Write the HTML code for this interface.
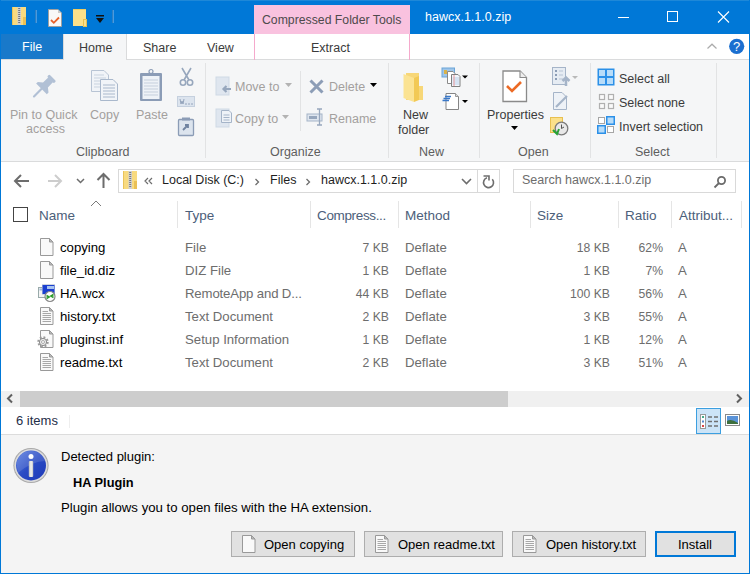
<!DOCTYPE html>
<html><head><meta charset="utf-8">
<style>
*{margin:0;padding:0;box-sizing:border-box}
html,body{width:750px;height:574px;overflow:hidden;background:#fff}
body{font-family:"Liberation Sans",sans-serif;font-size:12.5px;color:#000;position:relative}
.a{position:absolute;white-space:nowrap;line-height:1.15}
svg.a{overflow:visible}
#frame{position:absolute;left:0;top:0;width:750px;height:574px;border:1px solid #0078d7;border-top:none;pointer-events:none;z-index:50}
.gl{color:#5e5e5e}
.dis{color:#a3a09e}
.dk{color:#3b3b3b}
.sep{position:absolute;width:1px;background:#e2e3e4}
.hdr{color:#4c607a;font-size:13.5px}
.csep{position:absolute;top:201px;height:27px;width:1px;background:#e5e5e5}
.row{position:absolute;left:0;width:750px;height:23px}
.row div{font-size:13.2px;top:2px}
.row .num{font-size:12.2px;top:3px}
.nm{color:#000}
.gr{color:#6d6d6d}
.btn{position:absolute;top:531px;height:26px;background:#e1e1e1;border:1px solid #adadad}
.btn span{position:absolute;top:5px;font-size:13px;color:#000;white-space:nowrap}
</style></head><body>
<svg width="0" height="0" style="position:absolute">
<defs>
<g id="doc"><path d="M2.5 0.5H11.5L15 4V17.5H2.5Z" fill="#f9f9f9" stroke="#999"/><path d="M11.5 0.5V4H15Z" fill="#bbb" stroke="#999" stroke-linejoin="round"/></g>
<g id="ic-blank"><use href="#doc"/></g>
<g id="ic-txt"><use href="#doc"/><path d="M4.5 4.5H10M4.5 6.5H13M4.5 8.5H13M4.5 10.5H13M4.5 12.5H13M4.5 14.5H13" stroke="#a8a8a8"/></g>
<g id="ic-inf"><use href="#doc"/><circle cx="5" cy="12" r="4.6" fill="none" stroke="#9a9a9a" stroke-width="2.2" stroke-dasharray="1.8 1.8"/><circle cx="5" cy="12" r="3.6" fill="#ececec" stroke="#8a8a8a" stroke-width="1"/><circle cx="5" cy="12" r="1.5" fill="#fff" stroke="#999" stroke-width="0.8"/></g>
<g id="ic-wcx"><rect x="0.5" y="3.5" width="8" height="10" fill="#f4f4f4" stroke="#9aa"/><rect x="1.5" y="4.5" width="5" height="2" fill="#9fb8d8"/><rect x="4" y="0" width="13" height="11" fill="#cfd6de"/><rect x="4.5" y="1" width="12" height="9" fill="#1a3fd0"/><rect x="9" y="2" width="7" height="3" fill="#a9c4f0"/><circle cx="12" cy="12.5" r="5" fill="#fff" stroke="#888" stroke-width="1.2"/><path d="M8.5 11.5L11 13 8.5 14.5M15.5 10.5L13 12 15.5 13.5" stroke="#2a9a2a" stroke-width="1.6" fill="none"/></g>
<g id="zipf"><rect x="0" y="0" width="14" height="18" fill="#f8da7f"/><rect x="0" y="0" width="1" height="18" fill="#e9c35a"/><rect x="11" y="10" width="3" height="8" fill="#eac055"/><rect x="5.5" y="0" width="3.5" height="18" fill="#d0d0d0"/><path d="M6.2 1.5h2M6.2 3.5h2M6.2 5.5h2M6.2 7.5h2M6.2 9.5h2M6.2 11.5h2M6.2 13.5h2M6.2 15.5h2" stroke="#707070" stroke-width="0.9"/></g>
</defs></svg>
<div id="frame"></div>

<!-- ================= TITLE BAR ================= -->
<div class="a" style="left:0;top:0;width:750px;height:34px;background:#0078d7"></div>
<div class="a" style="left:0;top:0;width:750px;height:1px;background:#1e88d8"></div>
<svg class="a" style="left:12px;top:7px" width="15" height="19"><use href="#zipf"/></svg>
<div class="a" style="left:35px;top:10px;width:2px;height:13px;background:#4a9be0;border-left:1px solid #2d7fc4"></div>
<svg class="a" style="left:48px;top:9px" width="15" height="18"><path d="M0.5 0.5H10L13.5 4V17.5H0.5Z" fill="#f8f8f8" stroke="#a0a0a0"/><path d="M10 0.5V4H13.5Z" fill="#ccc"/><path d="M3 11L5.8 13.8 11 8.5" stroke="#e8622b" stroke-width="1.8" fill="none"/></svg>
<svg class="a" style="left:73px;top:9px" width="16" height="19"><path d="M0 0H13V17H0Z" fill="#fbe08a"/><rect x="0" y="0" width="13" height="1" fill="#f0cc60"/><rect x="10.5" y="10.5" width="3" height="7" fill="#fbe08a" stroke="#e8c050"/></svg>
<svg class="a" style="left:95px;top:15px" width="10" height="9"><rect x="1" y="0" width="8" height="1.5" fill="#111"/><path d="M1 3H9L5 8Z" fill="#111"/></svg>
<div class="a" style="left:112px;top:10px;width:2px;height:13px;background:#4a9be0;border-left:1px solid #2d7fc4"></div>
<div class="a" style="left:254px;top:5px;width:156px;height:29px;background:#f9c2df"></div>
<div class="a" style="left:262px;top:13px;color:#4e4a4c;font-size:12.25px">Compressed Folder Tools</div>
<div class="a" style="left:425px;top:10px;color:#fff">hawcx.1.1.0.zip</div>
<svg class="a" style="left:610px;top:5px" width="130" height="24">
<path d="M8 12.5H19" stroke="#fff" stroke-width="1"/>
<rect x="57.5" y="6.5" width="10" height="10" fill="none" stroke="#fff" stroke-width="1"/>
<path d="M108 6.5L119 17.5M119 6.5L108 17.5" stroke="#fff" stroke-width="1.1"/>
</svg>

<!-- ================= TABS ================= -->
<div class="a" style="left:0;top:34px;width:750px;height:26px;background:#fff;border-bottom:1px solid #dadbdc"></div>
<div class="a" style="left:1px;top:34px;width:62px;height:25px;background:#1979ca"></div>
<div class="a" style="left:22px;top:40px;color:#fff">File</div>
<div class="a" style="left:63px;top:34px;width:64px;height:27px;background:#f5f6f7;border-left:1px solid #dadbdc;border-right:1px solid #dadbdc"></div>
<div class="a dk" style="left:79px;top:41px">Home</div>
<div class="a dk" style="left:143px;top:41px">Share</div>
<div class="a dk" style="left:207px;top:41px">View</div>
<div class="a" style="left:254px;top:34px;width:156px;height:26px;border-left:1px solid #f5a9cc;border-right:1px solid #f5a9cc"></div>
<div class="a dk" style="left:311px;top:41px">Extract</div>
<svg class="a" style="left:705px;top:40px" width="40" height="16">
<path d="M2.5 8.5L7 4.2 11.5 8.5" stroke="#ababab" stroke-width="1.2" fill="none"/>
<circle cx="31.7" cy="6.3" r="7.6" fill="#1b6fd0"/><text x="31.7" y="11" fill="#fff" font-size="13" text-anchor="middle" font-family="Liberation Sans">?</text>
</svg>

<!-- ================= RIBBON ================= -->
<div class="a" style="left:0;top:60px;width:750px;height:102px;background:#f5f6f7;border-bottom:1px solid #dadbdc"></div>
<div class="sep" style="left:205px;top:63px;height:95px"></div>
<div class="sep" style="left:300px;top:71px;height:60px"></div>
<div class="sep" style="left:388px;top:63px;height:95px"></div>
<div class="sep" style="left:479px;top:63px;height:95px"></div>
<div class="sep" style="left:590px;top:63px;height:95px"></div>
<div class="sep" style="left:716px;top:63px;height:95px"></div>

<!-- clipboard icons -->
<svg class="a" style="left:25px;top:68px" width="40" height="36"><g transform="translate(17.4 20) rotate(45) scale(1.08)" fill="#b1c0d5"><rect x="-4.5" y="-13.5" width="9" height="3" rx="1.2"/><path d="M-3 -11H3L3.2 -4 7 -1 7 1.2H-7L-7 -1 -3.2 -4Z"/><rect x="-1" y="0" width="2" height="12" rx="1"/></g></svg>
<svg class="a" style="left:91px;top:70px" width="28" height="32">
<path d="M0.5 0.5H13L17.5 5V21.5H0.5Z" fill="#f1f4f8" stroke="#b8c4d4"/><path d="M3 5H13M3 8H15M3 11H15M3 14H15M3 17H15" stroke="#c9d3df"/>
<path d="M9.5 9.5H22L26.5 14V30.5H9.5Z" fill="#f1f4f8" stroke="#a9b8cc"/><path d="M12 15H24M12 18H24M12 21H24M12 24H24M12 27H24" stroke="#a9b8cc"/></svg>
<svg class="a" style="left:139px;top:69px" width="24" height="33">
<rect x="1" y="4" width="22" height="28" rx="1" fill="#8b9cb6"/><rect x="3.5" y="7" width="17" height="23" fill="#eef2f7"/>
<path d="M5 11H19M5 14H19M5 17H19M5 20H19M5 23H19M5 26H19" stroke="#c5cfdc"/>
<path d="M7 4H17V7H7Z" fill="#8b9cb6"/><circle cx="12" cy="2.5" r="2" fill="none" stroke="#8b9cb6" stroke-width="1.2"/></svg>
<svg class="a" style="left:179px;top:68px" width="16" height="19"><path d="M3 0L10 12M12 0L5 12" stroke="#97a7bd" stroke-width="1.6"/><circle cx="4" cy="14.5" r="2.7" fill="none" stroke="#97a7bd" stroke-width="1.6"/><circle cx="11" cy="14.5" r="2.7" fill="none" stroke="#97a7bd" stroke-width="1.6"/></svg>
<svg class="a" style="left:177px;top:96px" width="18" height="12"><rect x="0.5" y="0.5" width="17" height="10" fill="#dce4ee" stroke="#c5d0de"/><path d="M3 3L4 8 5 5 6 8 7 3M8 8H10M11 8H13M14 8H16" stroke="#8c9db6" stroke-width="0.9" fill="none"/></svg>
<svg class="a" style="left:178px;top:117px" width="16" height="19"><rect x="0.5" y="2.5" width="15" height="16" rx="1" fill="#dce4ee" stroke="#8b9cb6" stroke-width="1.3"/><rect x="4" y="0.5" width="8" height="3" fill="#8b9cb6"/><path d="M5 13L9.5 8.5M7 8H10V11" stroke="#6f83a0" stroke-width="1.8" fill="none"/></svg>
<div class="a dis" style="left:10px;top:108px">Pin to Quick</div>
<div class="a dis" style="left:26px;top:122px">access</div>
<div class="a dis" style="left:90px;top:108px">Copy</div>
<div class="a dis" style="left:136px;top:108px">Paste</div>
<div class="a gl" style="left:76px;top:145px">Clipboard</div>

<!-- organize -->
<svg class="a" style="left:215px;top:77px" width="18" height="19"><rect x="1" y="0" width="13" height="18" fill="#dfe6ef" stroke="#cfd9e5"/><path d="M16 12H9M11.5 9L8.5 12 11.5 15" stroke="#97a7bd" stroke-width="2.2" fill="none"/></svg>
<svg class="a" style="left:215px;top:109px" width="18" height="19"><rect x="1" y="0" width="13" height="18" fill="#dfe6ef" stroke="#cfd9e5"/><path d="M6.5 1.5H14L16.5 4V13.5H6.5Z" fill="#eef2f7" stroke="#a5b4c8"/><path d="M8.5 6H14.5M8.5 8.5H14.5M8.5 11H14.5" stroke="#a5b4c8"/></svg>
<div class="a dis" style="left:235px;top:80px">Move to</div>
<svg class="a" style="left:285px;top:83px" width="8" height="5"><path d="M0 0H7L3.5 4Z" fill="#b3b3b3"/></svg>
<div class="a dis" style="left:235px;top:112px">Copy to</div>
<svg class="a" style="left:282px;top:115px" width="8" height="5"><path d="M0 0H7L3.5 4Z" fill="#b3b3b3"/></svg>
<svg class="a" style="left:309px;top:79px" width="15" height="15"><path d="M1.5 1.5L13.5 13.5M13.5 1.5L1.5 13.5" stroke="#8c9db6" stroke-width="3"/></svg>
<div class="a dis" style="left:329px;top:80px">Delete</div>
<svg class="a" style="left:370px;top:83px" width="8" height="5"><path d="M0 0H7L3.5 4Z" fill="#000"/></svg>
<svg class="a" style="left:306px;top:108px" width="20" height="19"><rect x="1" y="6" width="15" height="7" fill="#dfe6ef" stroke="#a5b4c8"/><rect x="3" y="8" width="8" height="3" fill="#97a7bd"/><path d="M13.5 1V17M11 1H16M11 17H16" stroke="#97a7bd" stroke-width="1.3"/></svg>
<div class="a dis" style="left:329px;top:112px">Rename</div>
<div class="a gl" style="left:270px;top:145px">Organize</div>

<!-- new -->
<svg class="a" style="left:403px;top:72px" width="22" height="31"><path d="M3 1H16V14H20V28H3Z" fill="#f7d778"/><path d="M0.5 2L11 6V30L0.5 26Z" fill="#fbe393"/><path d="M11 6L16 4V28L11 30Z" fill="#f2c955"/></svg>
<svg class="a" style="left:441px;top:67px" width="30" height="20"><rect x="1" y="1" width="12.5" height="9" fill="#9fc6ea" stroke="#6aa4d8"/><rect x="3" y="3" width="3" height="4" fill="#d9b24a"/><path d="M6.5 4.5H12L14 6.5V16.5H6.5Z" fill="#fff" stroke="#8a8a8a"/><path d="M10.5 7.5H17L19 9.5V19.5H10.5Z" fill="#f2f6fb" stroke="#808080"/><path d="M11.5 11H18M11.5 13H18M11.5 15H18M11.5 17H18" stroke="#b9d0ea"/><path d="M13 8V19" stroke="#ec9a9a"/><path d="M21 8.5H27L24 11.5Z" fill="#000"/></svg>
<svg class="a" style="left:441px;top:92px" width="30" height="20"><path d="M5 1.5H14.5L17.5 4.5V17.5H5Z" fill="#fff" stroke="#858585"/><path d="M14.5 1.5V4.5H17.5" fill="#ddd" stroke="#999"/><path d="M4 4.5H10M2.5 6.5H9M1.5 8.5H8" stroke="#3a78c8" stroke-width="1.3"/><path d="M21 8H27L24 11Z" fill="#000"/></svg>
<div class="a dk" style="left:403px;top:108px">New</div>
<div class="a dk" style="left:398px;top:123px">folder</div>
<div class="a gl" style="left:419px;top:145px">New</div>

<!-- open -->
<svg class="a" style="left:502px;top:70px" width="26" height="33"><path d="M1 1H18L24.5 7.5V31.5H1Z" fill="#fff" stroke="#8a8a8a" stroke-width="1.3"/><path d="M18 1V7.5H24.5" fill="#eee" stroke="#8a8a8a" stroke-width="1.1"/><path d="M5 16L10 21 19 12" stroke="#ec6a25" stroke-width="2.6" fill="none"/></svg>
<div class="a dk" style="left:487px;top:108px">Properties</div>
<svg class="a" style="left:511px;top:126px" width="8" height="5"><path d="M0 0H7L3.5 4Z" fill="#000"/></svg>
<svg class="a" style="left:552px;top:67px" width="28" height="20"><rect x="0.5" y="0.5" width="13" height="17" fill="#e6ecf3" stroke="#a5b4c8"/><path d="M3 4H5M3 8H5M3 12H5" stroke="#8c9db6" stroke-width="2"/><path d="M7 4H11M7 8H11M7 12H11" stroke="#b8c4d4"/><path d="M14 19V11M10.5 14L14 10.5 17.5 14" stroke="#a5b4c8" stroke-width="2.5" fill="none"/><path d="M20 9H26L23 12Z" fill="#b9b9b9"/></svg>
<svg class="a" style="left:552px;top:92px" width="18" height="19"><path d="M1.5 0.5H10L14.5 5V17.5H1.5Z" fill="#eef2f7" stroke="#a5b4c8"/><path d="M4 15L15 4" stroke="#a5b4c8" stroke-width="2.2"/></svg>
<svg class="a" style="left:549px;top:116px" width="20" height="20"><rect x="1.5" y="1.5" width="12" height="15" fill="#fbe08a" stroke="#e8c050"/><circle cx="12.5" cy="12.5" r="6.3" fill="#e8e8e8" stroke="#7a7a7a" stroke-width="1.3"/><path d="M12.5 8.5V12.5L15 11" stroke="#555" fill="none"/><path d="M4 14L8 18 10 13" stroke="#26a236" stroke-width="2" fill="none"/></svg>
<div class="a gl" style="left:518px;top:145px">Open</div>

<!-- select -->
<svg class="a" style="left:597px;top:68px" width="19" height="19"><rect x="0.5" y="0.5" width="17" height="17" fill="#2b90e8"/><rect x="2" y="2" width="6" height="6" fill="#b7dcf9"/><rect x="10" y="2" width="6" height="6" fill="#b7dcf9"/><rect x="2" y="10" width="6" height="6" fill="#b7dcf9"/><rect x="10" y="10" width="6" height="6" fill="#b7dcf9"/></svg>
<svg class="a" style="left:597px;top:92px" width="19" height="19"><g fill="#fafafa" stroke="#b0b0b0" stroke-width="1.2"><rect x="2.5" y="2.5" width="5" height="5"/><rect x="11.5" y="2.5" width="5" height="5"/><rect x="2.5" y="11.5" width="5" height="5"/><rect x="11.5" y="11.5" width="5" height="5"/></g></svg>
<svg class="a" style="left:597px;top:116px" width="19" height="19"><g fill="#fff" stroke="#a6a6a6"><rect x="1.5" y="1.5" width="6" height="6"/><rect x="10.5" y="10.5" width="6" height="6"/></g><rect x="9" y="0" width="9" height="9" fill="#2b90e8"/><rect x="10.5" y="1.5" width="6" height="6" fill="#b7dcf9"/><rect x="0" y="9" width="9" height="9" fill="#2b90e8"/><rect x="1.5" y="10.5" width="6" height="6" fill="#b7dcf9"/></svg>
<div class="a dk" style="left:619px;top:72px">Select all</div>
<div class="a dk" style="left:619px;top:96px">Select none</div>
<div class="a dk" style="left:619px;top:120px">Invert selection</div>
<div class="a gl" style="left:635px;top:145px">Select</div>

<!-- ================= ADDRESS BAR ================= -->
<svg class="a" style="left:0px;top:170px" width="115" height="22">
<path d="M15 11H29M21 5L15 11 21 17" stroke="#6d6d6d" stroke-width="2" fill="none"/>
<path d="M48 11H61M55 5L61 11 55 17" stroke="#cdcdcd" stroke-width="2" fill="none"/>
<path d="M77 9L80.5 12.5 84 9" stroke="#6d6d6d" stroke-width="1.5" fill="none"/>
<path d="M103.5 18V4.5M97.5 10L103.5 4 109.5 10" stroke="#6d6d6d" stroke-width="2" fill="none"/>
</svg>
<div class="a" style="left:118px;top:169px;width:382px;height:24px;border:1px solid #d9d9d9"></div>
<div class="a" style="left:477px;top:169px;width:1px;height:24px;background:#d9d9d9"></div>
<svg class="a" style="left:123px;top:171px" width="15" height="19"><use href="#zipf"/></svg>
<svg class="a" style="left:143px;top:176px" width="180" height="12">
<path d="M5 2L2 5 5 8M9 2L6 5 9 8" stroke="#6d6d6d" stroke-width="1.2" fill="none"/>
<path d="M112.5 3L115.5 6 112.5 9M163.5 3L166.5 6 163.5 9" stroke="#6d6d6d" stroke-width="1.3" fill="none"/>
</svg>
<div class="a" style="left:162px;top:173px;color:#1e1e1e">Local Disk (C:)</div>
<div class="a" style="left:270px;top:173px;color:#1e1e1e">Files</div>
<div class="a" style="left:321px;top:173px;color:#1e1e1e">hawcx.1.1.0.zip</div>
<svg class="a" style="left:460px;top:176px" width="40" height="14">
<path d="M2 3L6.5 7.5 11 3" stroke="#6d6d6d" stroke-width="1.6" fill="none"/>
<path d="M32.3 3.3A5 5 0 1 1 27 1.8" stroke="#6d6d6d" stroke-width="1.6" fill="none"/><path d="M23.5 0H29V4.6" stroke="#6d6d6d" stroke-width="1.6" fill="none"/>
</svg>
<div class="a" style="left:513px;top:169px;width:223px;height:24px;border:1px solid #d9d9d9"></div>
<div class="a" style="left:522px;top:173px;color:#6d6d6d">Search hawcx.1.1.0.zip</div>
<svg class="a" style="left:713px;top:176px" width="14" height="12"><circle cx="8.5" cy="4.5" r="3.6" stroke="#6a6a6a" stroke-width="1.8" fill="none"/><path d="M6 7L1.5 11.5" stroke="#6a6a6a" stroke-width="1.8"/></svg>

<!-- ================= COLUMN HEADERS ================= -->
<div class="csep" style="left:177px"></div>
<div class="csep" style="left:310px"></div>
<div class="csep" style="left:398px"></div>
<div class="csep" style="left:530px"></div>
<div class="csep" style="left:618px"></div>
<div class="csep" style="left:671px"></div>
<div class="csep" style="left:741px"></div>
<div class="a" style="left:13px;top:207px;width:15px;height:15px;border:1.5px solid #444"></div>
<svg class="a" style="left:90px;top:200px" width="12" height="8"><path d="M1 6L6 1 11 6" stroke="#7a7a7a" stroke-width="1" fill="none"/></svg>
<div class="a hdr" style="left:39px;top:208px">Name</div>
<div class="a hdr" style="left:185px;top:208px">Type</div>
<div class="a hdr" style="left:317px;top:208px;letter-spacing:-0.35px">Compress...</div>
<div class="a hdr" style="left:405px;top:208px">Method</div>
<div class="a hdr" style="left:537px;top:208px">Size</div>
<div class="a hdr" style="left:625px;top:208px">Ratio</div>
<div class="a hdr" style="left:679px;top:208px">Attribut...</div>

<!-- ================= ROWS ================= -->
<div class="row" style="top:238px"><svg class="a" style="left:38px;top:0px" width="18" height="19"><use href="#ic-blank"/></svg><div class="a nm" style="left:60px">copying</div><div class="a gr" style="left:185px">File</div><div class="a gr num" style="right:361px">7 KB</div><div class="a gr" style="left:405px">Deflate</div><div class="a gr num" style="right:140px">18 KB</div><div class="a gr num" style="right:87px">62%</div><div class="a gr" style="left:678px">A</div></div>
<div class="row" style="top:261px"><svg class="a" style="left:38px;top:0px" width="18" height="19"><use href="#ic-blank"/></svg><div class="a nm" style="left:60px">file_id.diz</div><div class="a gr" style="left:185px">DIZ File</div><div class="a gr num" style="right:361px">1 KB</div><div class="a gr" style="left:405px">Deflate</div><div class="a gr num" style="right:140px">1 KB</div><div class="a gr num" style="right:87px">7%</div><div class="a gr" style="left:678px">A</div></div>
<div class="row" style="top:284px"><svg class="a" style="left:38px;top:0px" width="18" height="19"><use href="#ic-wcx"/></svg><div class="a nm" style="left:60px">HA.wcx</div><div class="a gr" style="left:185px;letter-spacing:-0.15px">RemoteApp and D...</div><div class="a gr num" style="right:361px">44 KB</div><div class="a gr" style="left:405px">Deflate</div><div class="a gr num" style="right:140px">100 KB</div><div class="a gr num" style="right:87px">56%</div><div class="a gr" style="left:678px">A</div></div>
<div class="row" style="top:307px"><svg class="a" style="left:38px;top:0px" width="18" height="19"><use href="#ic-txt"/></svg><div class="a nm" style="left:60px">history.txt</div><div class="a gr" style="left:185px">Text Document</div><div class="a gr num" style="right:361px">2 KB</div><div class="a gr" style="left:405px">Deflate</div><div class="a gr num" style="right:140px">3 KB</div><div class="a gr num" style="right:87px">55%</div><div class="a gr" style="left:678px">A</div></div>
<div class="row" style="top:330px"><svg class="a" style="left:38px;top:0px" width="18" height="19"><use href="#ic-inf"/></svg><div class="a nm" style="left:60px">pluginst.inf</div><div class="a gr" style="left:185px">Setup Information</div><div class="a gr num" style="right:361px">1 KB</div><div class="a gr" style="left:405px">Deflate</div><div class="a gr num" style="right:140px">1 KB</div><div class="a gr num" style="right:87px">12%</div><div class="a gr" style="left:678px">A</div></div>
<div class="row" style="top:353px"><svg class="a" style="left:38px;top:0px" width="18" height="19"><use href="#ic-txt"/></svg><div class="a nm" style="left:60px">readme.txt</div><div class="a gr" style="left:185px">Text Document</div><div class="a gr num" style="right:361px">2 KB</div><div class="a gr" style="left:405px">Deflate</div><div class="a gr num" style="right:140px">3 KB</div><div class="a gr num" style="right:87px">51%</div><div class="a gr" style="left:678px">A</div></div>

<!-- ================= SCROLLBAR ================= -->
<div class="a" style="left:1px;top:391px;width:748px;height:16px;background:#f0f0f0"></div>
<div class="a" style="left:20px;top:391px;width:488px;height:16px;background:#cdcdcd"></div>
<svg class="a" style="left:4px;top:393px" width="12" height="12"><path d="M8 1.5L4 5.5 8 9.5" stroke="#606060" stroke-width="2" fill="none"/></svg>
<svg class="a" style="left:734px;top:393px" width="12" height="12"><path d="M3 1.5L7 5.5 3 9.5" stroke="#606060" stroke-width="2" fill="none"/></svg>

<!-- ================= STATUS ================= -->
<div class="a" style="left:16px;top:414px;font-size:13px;color:#1e2e48">6 items</div>
<div class="a" style="left:69px;top:415px;width:1px;height:13px;background:#eeeeee"></div>
<div class="a" style="left:696px;top:408px;width:25px;height:26px;background:#cce4f7;border:1.5px solid #3c9fe0"></div>
<svg class="a" style="left:699px;top:413px" width="20" height="16"><rect x="1.5" y="1.5" width="5" height="14" fill="#fff" stroke="#9a9a9a"/><path d="M9 4H13M15 4H19M9 8.5H13M15 8.5H19M9 13H13M15 13H19" stroke="#707070" stroke-width="1.3"/><rect x="3" y="3" width="2" height="2" fill="#4a8"/><rect x="3" y="7.5" width="2" height="2" fill="#58c"/><rect x="3" y="12" width="2" height="2" fill="#d44"/></svg>
<svg class="a" style="left:725px;top:414px" width="16" height="13"><rect x="0.5" y="0.5" width="14" height="11" fill="#fff" stroke="#8a8a8a"/><rect x="2" y="2" width="11" height="8" fill="#5a93d8"/><path d="M2 7Q6 4 13 9V10H2Z" fill="#3d6f3d"/></svg>
<div class="a" style="left:1px;top:434px;width:748px;height:1px;background:#dcdcdc"></div>

<!-- ================= PLUGIN PANEL ================= -->
<div class="a" style="left:1px;top:435px;width:748px;height:138px;background:#f4f4f4"></div>
<svg class="a" style="left:12px;top:446px" width="38" height="38">
<defs><linearGradient id="ib" x1="0" y1="0" x2="1" y2="1"><stop offset="0" stop-color="#5b7fe0"/><stop offset="0.5" stop-color="#2a4bc4"/><stop offset="1" stop-color="#1d39b8"/></linearGradient>
<linearGradient id="ibar" x1="0" y1="0" x2="1" y2="0"><stop offset="0" stop-color="#b8b8b8"/><stop offset="0.5" stop-color="#f4f4f4"/><stop offset="1" stop-color="#c4c4c4"/></linearGradient></defs>
<circle cx="19" cy="19.5" r="17.6" fill="#a9a9a9"/><circle cx="19" cy="19.5" r="16.6" fill="#dcdcdc"/><circle cx="19" cy="19.5" r="15" fill="url(#ib)"/>
<path d="M4.5 17A15 15 0 0 1 33.5 15Q20 15 6 27Z" fill="#fff" opacity="0.13"/>
<circle cx="19" cy="10.5" r="2.5" fill="#fff"/><rect x="16.8" y="15" width="4.4" height="16" rx="1" fill="url(#ibar)"/>
</svg>
<div class="a" style="left:61px;top:450px;font-size:13px;color:#000">Detected plugin:</div>
<div class="a" style="left:73px;top:476px;font-size:12.8px;font-weight:bold;color:#000">HA Plugin</div>
<div class="a" style="left:61px;top:500px;font-size:13.2px;color:#000">Plugin allows you to open files with the HA extension.</div>

<div class="btn" style="left:231px;width:124px"><svg class="a" style="left:8px;top:3px" width="18" height="19"><use href="#ic-blank"/></svg><span style="left:32px">Open copying</span></div>
<div class="btn" style="left:364px;width:139px"><svg class="a" style="left:8px;top:3px" width="18" height="19"><use href="#ic-txt"/></svg><span style="left:33px">Open readme.txt</span></div>
<div class="btn" style="left:512px;width:134px"><svg class="a" style="left:8px;top:3px" width="18" height="19"><use href="#ic-txt"/></svg><span style="left:33px">Open history.txt</span></div>
<div class="btn" style="left:655px;width:81px;border:2px solid #0078d7"><span style="left:21px;top:4px">Install</span></div>

</body></html>
